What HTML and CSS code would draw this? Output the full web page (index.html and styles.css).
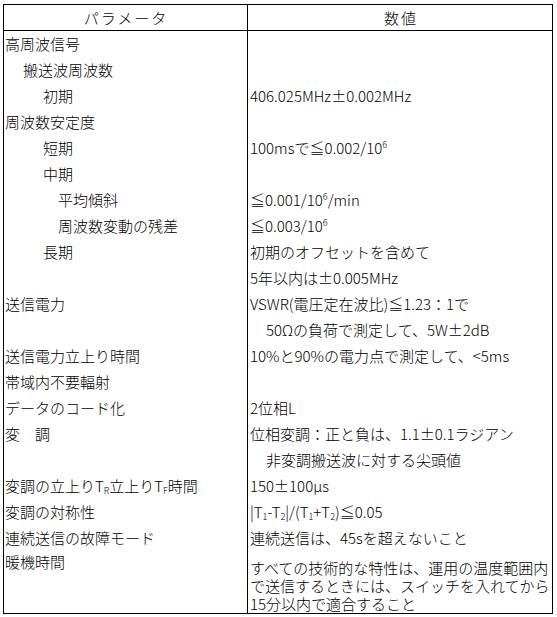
FILE: index.html
```html
<!DOCTYPE html>
<html lang="ja">
<head>
<meta charset="utf-8">
<title>パラメータ</title>
<link rel="stylesheet" href="styles.css">
</head>
<body>
<table class="spec">
  <colgroup><col class="c1"><col class="c2"></colgroup>
  <thead>
    <tr><th>パラメータ</th><th class="rc">数値</th></tr>
  </thead>
  <tbody>
    <tr><td>高周波信号</td><td class="rc"></td></tr>
    <tr><td class="i1">搬送波周波数</td><td class="rc"></td></tr>
    <tr><td class="i2">初期</td><td class="rc">406.025MHz±0.002MHz</td></tr>
    <tr><td>周波数安定度</td><td class="rc"></td></tr>
    <tr><td class="i2">短期</td><td class="rc">100msで≦0.002/10<sup class="sup">6</sup></td></tr>
    <tr><td class="i2">中期</td><td class="rc"></td></tr>
    <tr><td class="i3">平均傾斜</td><td class="rc">≦0.001/10<sup class="sup">6</sup>/min</td></tr>
    <tr><td class="i3">周波数変動の残差</td><td class="rc">≦0.003/10<sup class="sup">6</sup></td></tr>
    <tr><td class="i2">長期</td><td class="rc">初期のオフセットを含めて</td></tr>
    <tr><td></td><td class="rc">5年以内は±0.005MHz</td></tr>
    <tr><td>送信電力</td><td class="rc">VSWR(電圧定在波比)≦1.23：1で</td></tr>
    <tr><td></td><td class="rc ri">50Ωの負荷で測定して、5W±2dB</td></tr>
    <tr><td>送信電力立上り時間</td><td class="rc">10%と90%の電力点で測定して、&lt;5ms</td></tr>
    <tr><td>帯域内不要輻射</td><td class="rc"></td></tr>
    <tr><td>データのコード化</td><td class="rc">2位相L</td></tr>
    <tr><td>変　調</td><td class="rc">位相変調：正と負は、1.1±0.1ラジアン</td></tr>
    <tr><td></td><td class="rc ri">非変調搬送波に対する尖頭値</td></tr>
    <tr><td>変調の立上りT<sub class="sub">R</sub>立上りT<sub class="sub">F</sub>時間</td><td class="rc">150±100μs</td></tr>
    <tr><td>変調の対称性</td><td class="rc">|T<sub class="sub">1</sub>-T<sub class="sub">2</sub>|/(T<sub class="sub">1</sub>+T<sub class="sub">2</sub>)≦0.05</td></tr>
    <tr><td>連続送信の故障モード</td><td class="rc">連続送信は、45sを超えないこと</td></tr>
    <tr class="last"><td class="lt">暖機時間</td><td class="rc rt">すべての技術的な特性は、運用の温度範囲内<br>で送信するときには、スイッチを入れてから<br>15分以内で適合すること</td></tr>
  </tbody>
</table>
</body>
</html>
```
FILE: styles.css
```css
html, body {
  margin: 0;
  padding: 0;
  background: #fff;
}

body {
  font-family: "Noto Sans CJK JP", "Noto Sans", sans-serif;
  font-size: 15px;
  font-weight: 300;
  color: #000;
}

.spec {
  margin: 4px 0 0 3px;
  width: 550px;
  table-layout: fixed;
  border: 1px solid #000;
  border-spacing: 0;
}

.c1 { width: 243px; }
.c2 { width: 305px; }

.spec th,
.spec td {
  padding: 0 0 0 1px;
  white-space: nowrap;
  text-align: left;
  vertical-align: middle;
  line-height: 26px;
  font-weight: 300;
}

.spec th {
  line-height: 25px;
  text-align: center;
  border-bottom: 1px solid #000;
  letter-spacing: 2px;
}

.spec .rc {
  border-left: 1px solid #000;
  padding-left: 2px;
}

.spec .i1 { padding-left: 19px; }
.spec .i2 { padding-left: 39px; }
.spec .i3 { padding-left: 54px; }
.spec .ri { padding-left: 18px; }

.sup {
  font-size: 9px;
  line-height: 0;
  vertical-align: 6px;
}

.sub {
  font-size: 9px;
  line-height: 0;
  vertical-align: -2px;
}

.last td {
  vertical-align: top;
}

.spec .lt {
  line-height: 18px;
  padding-top: 2px;
}

.spec .rt {
  line-height: 18px;
  padding-top: 8px;
  padding-bottom: 0;
}
```
